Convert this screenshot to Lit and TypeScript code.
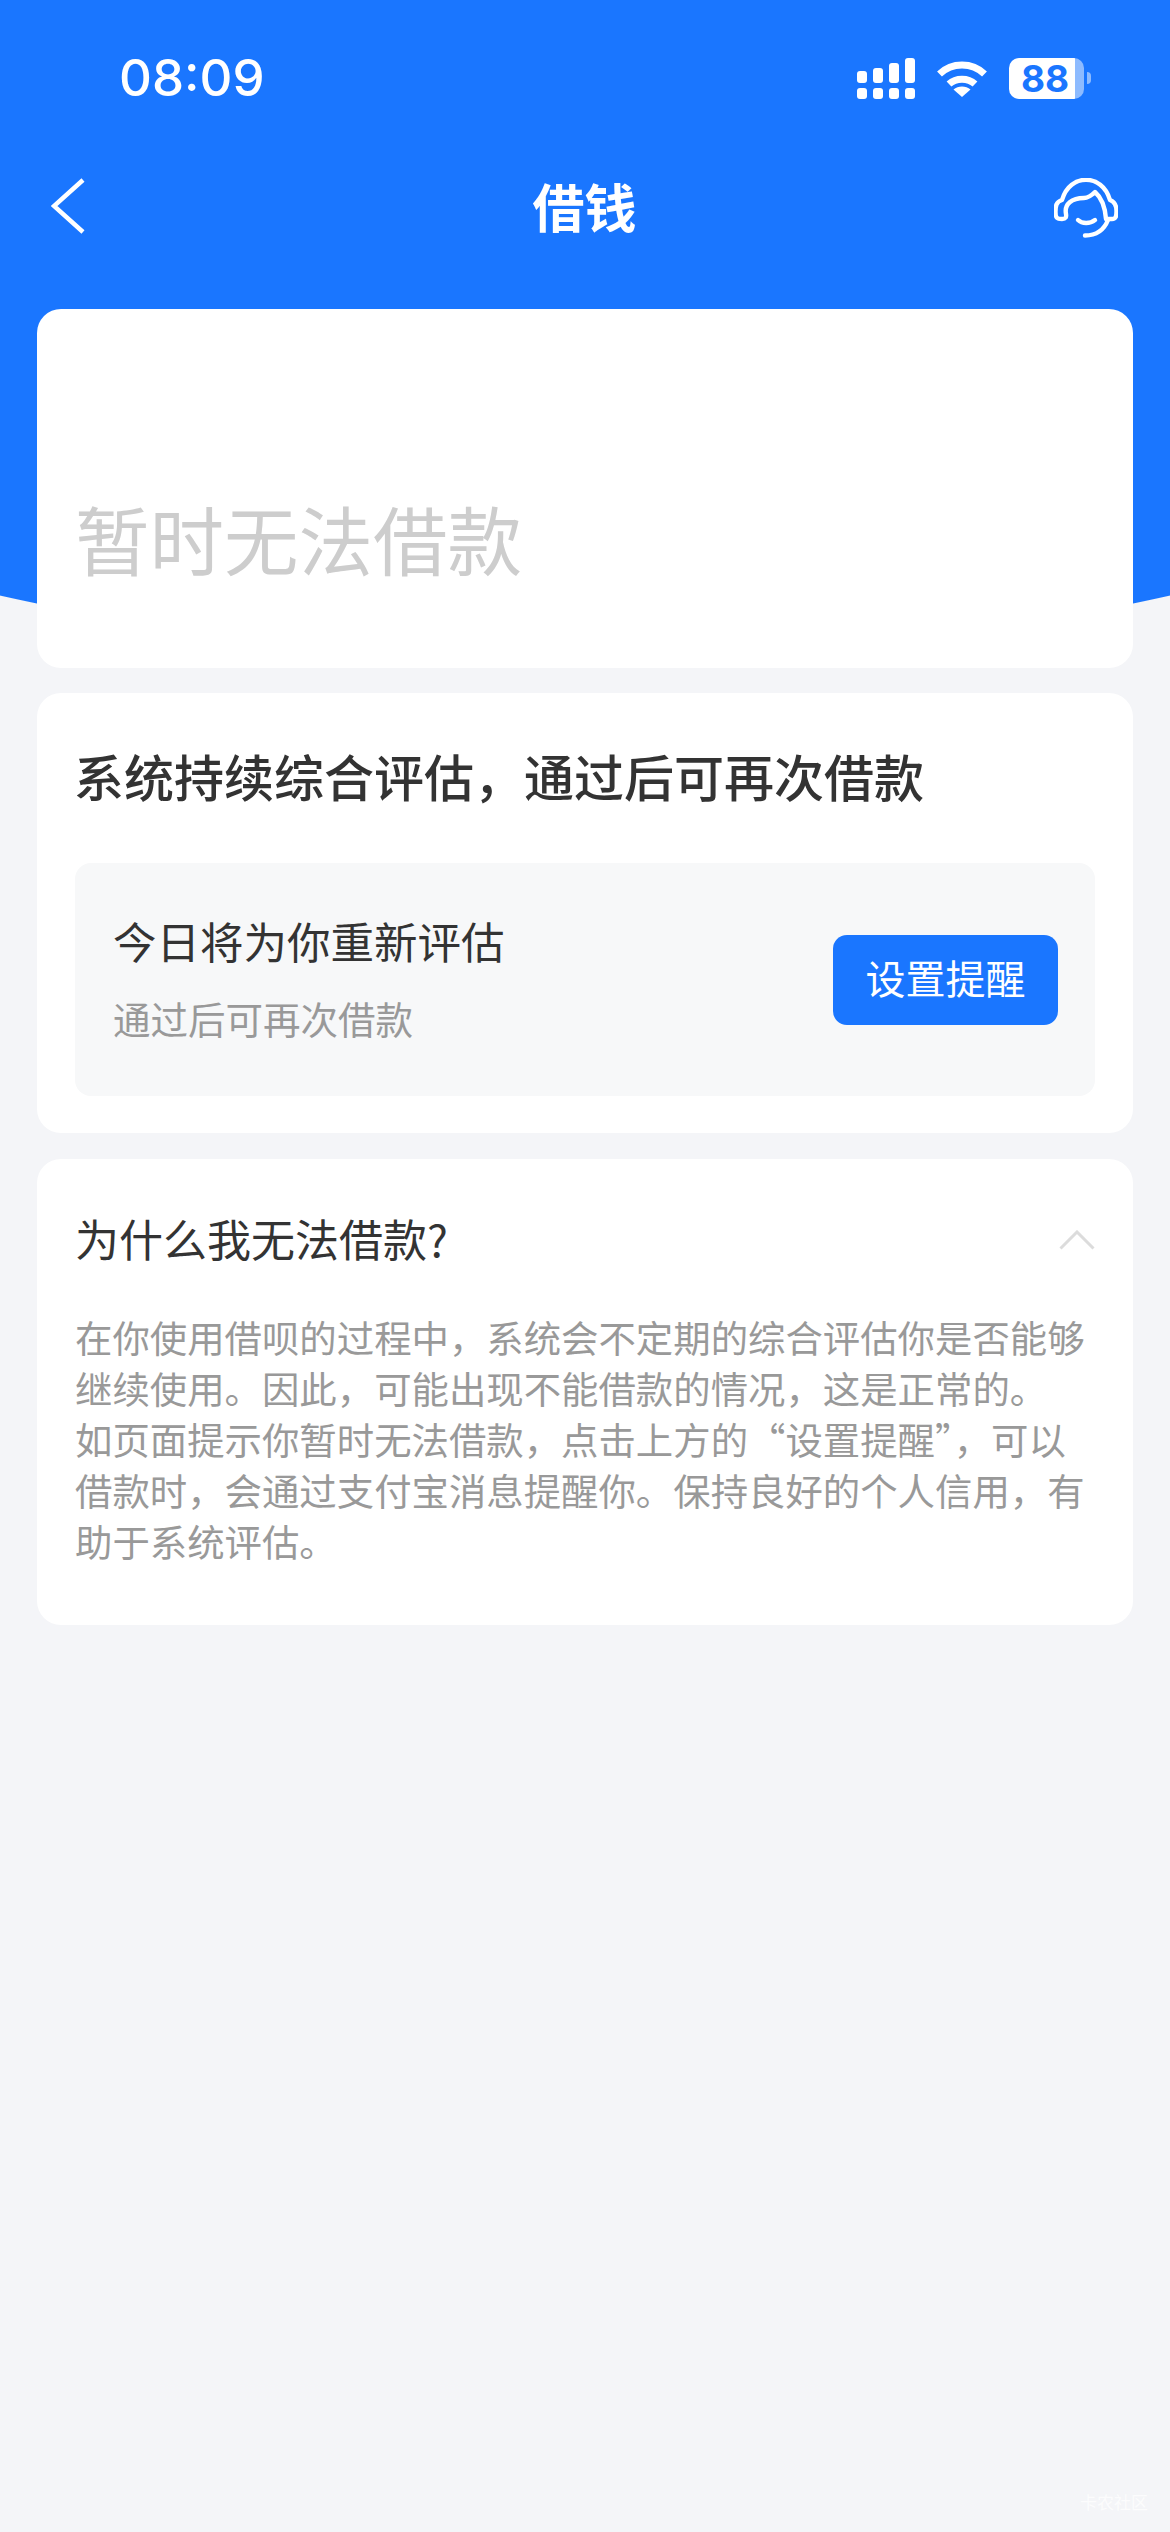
import { LitElement, html, css } from "lit";
import { customElement } from "lit/decorators.js";

@customElement("app-root")
export class AppRoot extends LitElement {
  static styles = css`
    :host {
      display: block;
      position: relative;
      width: 1170px;
      height: 2532px;
      overflow: hidden;
      font-family: "Noto Sans CJK SC", "Noto Sans", sans-serif;
      background:
        radial-gradient(circle 2687px at 585px -2027px, #1a76ff 2686.5px, rgba(26,118,255,0) 2687.5px),
        #f4f5f8;
    }
    .status {
      height: 156px;
      box-sizing: border-box;
      padding: 0 79px 0 119px;
      display: flex;
      align-items: center;
      color: #fff;
    }
    .time {
      font-family: Inter, "Liberation Sans", sans-serif;
      font-weight: 500;
      font-size: 51px;
      line-height: 60px;
      flex: 1;
    }
    .icons { display: flex; align-items: center; gap: 22px; }
    .icons svg { display: block; }
    .battery { display: flex; align-items: center; gap: 3px; }
    .cell {
      width: 75px;
      height: 41px;
      box-sizing: border-box;
      padding-left: 12px;
      border-radius: 10px;
      background: linear-gradient(to right, #fff 66px, rgba(255,255,255,.5) 66px);
      color: #1a76ff;
      font-family: Inter, "Liberation Sans", sans-serif;
      font-weight: 700;
      font-size: 37px;
      line-height: 41px;
    }
    .nub {
      width: 4px;
      height: 12px;
      border-radius: 0 6px 6px 0;
      background: rgba(255,255,255,.5);
    }
    .nav {
      height: 100px;
      box-sizing: border-box;
      padding: 0 52px 0 51px;
      display: grid;
      grid-template-columns: 1fr auto 1fr;
      align-items: center;
    }
    .nav svg { display: block; }
    .nav .help { justify-self: end; margin-top: 4px; }
    .title {
      color: #fff;
      font-size: 52px;
      font-weight: 700;
      line-height: 70px;
    }
    .content {
      padding: 53px 37px 0;
      display: flex;
      flex-direction: column;
    }
    .card { background: #fff; border-radius: 24px; }
    .c1 { height: 359px; box-sizing: border-box; padding: 179px 0 0 38px; margin-bottom: 25px; }
    .big { color: #cdcdcd; font-size: 74.5px; line-height: 100px; }
    .c2 { height: 440px; box-sizing: border-box; padding: 47px 38px 37px; margin-bottom: 26px; }
    .heading { color: #333; font-size: 50px; font-weight: 500; line-height: 70px; margin-left: -1px; }
    .panel {
      margin-top: 53px;
      height: 233px;
      box-sizing: border-box;
      padding: 0 37px 0 38px;
      background: #f7f8f9;
      border-radius: 16px;
      display: flex;
      align-items: center;
      justify-content: space-between;
    }
    .p-text { margin-top: -6px; }
    .p-main { color: #333; font-size: 43.5px; line-height: 60px; }
    .p-sub { color: #999; font-size: 37.5px; line-height: 50px; margin-top: 22px; }
    .btn {
      width: 225px;
      height: 90px;
      border-radius: 14px;
      background: #1a76ff;
      color: #fff;
      font-size: 40px;
      line-height: 84px;
      text-align: center;
    }
    .c3 { height: 466px; box-sizing: border-box; padding: 49px 38px 0; }
    .q {
      display: flex;
      align-items: center;
      justify-content: space-between;
      color: #333;
      font-size: 44px;
      line-height: 60px;
    }
    .q svg { margin-top: 4px; }
    .answer { margin-top: 44px; color: #999; font-size: 37.4px; line-height: 51px; white-space: nowrap; }
    .mark {
      position: absolute;
      left: 1080px;
      top: 2490px;
      font-size: 17px;
      line-height: 24px;
      color: rgba(255,255,255,.75);
    }
  `;

  render() {
    return html`
      <div class="status">
        <div class="time">08:09</div>
        <div class="icons">
          <svg width="58" height="41" viewBox="0 0 58 41" fill="#fff">
            <rect x="0" y="13" width="10" height="12" rx="3"/>
            <rect x="16" y="10" width="10" height="15" rx="3"/>
            <rect x="32" y="5" width="10" height="20" rx="3"/>
            <rect x="48" y="0" width="10" height="25" rx="3"/>
            <rect x="0" y="30" width="10" height="11" rx="3"/>
            <rect x="16" y="30" width="10" height="11" rx="3"/>
            <rect x="32" y="30" width="10" height="11" rx="3"/>
            <rect x="48" y="30" width="10" height="11" rx="3"/>
          </svg>
          <svg width="50" height="37" viewBox="0 0 50 37">
            <path d="M2.5 14C15 2 35 2 47.5 14" fill="none" stroke="#fff" stroke-width="7"/>
            <path d="M12 24C19 17.5 31 17.5 38 24" fill="none" stroke="#fff" stroke-width="7"/>
            <path d="M25 37L16.5 29.5C21 25.5 29 25.5 33.5 29.5Z" fill="#fff"/>
          </svg>
          <div class="battery">
            <div class="cell">88</div>
            <div class="nub"></div>
          </div>
        </div>
      </div>
      <div class="nav">
        <svg width="34" height="58" viewBox="0 0 34 58" fill="none" stroke="#fff" stroke-width="4.5">
          <path d="M32 3L3 29L32 55"/>
        </svg>
        <div class="title">借钱</div>
        <svg class="help" width="64" height="60" viewBox="0 0 64 60" fill="none" stroke="#fff" stroke-width="4.4" stroke-linecap="round" stroke-linejoin="round">
          <path d="M8 22C2 24 1.5 28 1.5 34C1.5 40 3 41 8 41C12 41 12.5 39 12 36C10 26 18 20 30 20C35 20 38 17 41 14C48 20 51 28 52 41C54 41 56 41 58 41C62 41 62.5 38 62.5 33C62.5 28 61 24 56 22C52 8 42 1.8 32 1.8C22 1.8 12 8 8 22Z"/>
          <path d="M24 42C28 46 36 46 41 42"/>
          <path d="M31 57.5C42 57.5 50 52 54 42"/>
        </svg>
      </div>
      <div class="content">
        <section class="card c1"><div class="big">暂时无法借款</div></section>
        <section class="card c2">
          <div class="heading">系统持续综合评估，通过后可再次借款</div>
          <div class="panel">
            <div class="p-text">
              <div class="p-main">今日将为你重新评估</div>
              <div class="p-sub">通过后可再次借款</div>
            </div>
            <div class="btn">设置提醒</div>
          </div>
        </section>
        <section class="card c3">
          <div class="q">
            <span>为什么我无法借款?</span>
            <svg width="36" height="20" viewBox="0 0 36 20" fill="none" stroke="#dcdcdc" stroke-width="3">
              <path d="M1.5 18.5L18 2L34.5 18.5"/>
            </svg>
          </div>
          <div class="answer">
            <div>在你使用借呗的过程中，系统会不定期的综合评估你是否能够</div>
            <div>继续使用。因此，可能出现不能借款的情况，这是正常的。</div>
            <div>如页面提示你暂时无法借款，点击上方的“设置提醒”，可以</div>
            <div>借款时，会通过支付宝消息提醒你。保持良好的个人信用，有</div>
            <div>助于系统评估。</div>
          </div>
        </section>
      </div>
      <div class="mark">卡农社区</div>
    `;
  }
}
